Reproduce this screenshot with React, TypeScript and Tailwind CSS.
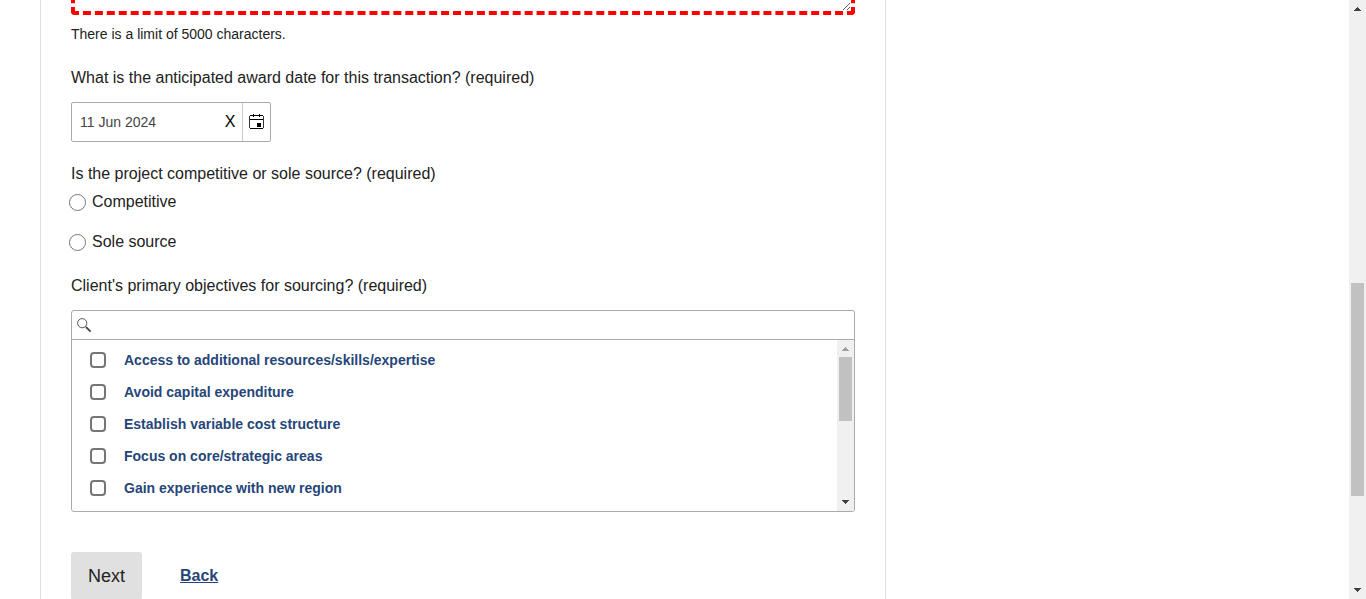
import { useState } from "react";

const objectives = [
  "Access to additional resources/skills/expertise",
  "Avoid capital expenditure",
  "Establish variable cost structure",
  "Focus on core/strategic areas",
  "Gain experience with new region",
];

function Arrow({ down = false, className }: { down?: boolean; className: string }) {
  return (
    <svg viewBox="0 0 7 4" shapeRendering="crispEdges" className={`h-1 w-[7px] shrink-0 ${className}`} aria-hidden="true">
      {down ? (
        <path fill="currentColor" d="M0 0h7v1H0zM1 1h5v1H1zM2 2h3v1H2zM3 3h1v1H3z" />
      ) : (
        <path fill="currentColor" d="M3 0h1v1H3zM2 1h3v1H2zM1 2h5v1H1zM0 3h7v1H0z" />
      )}
    </svg>
  );
}

function CalendarIcon() {
  return (
    <svg viewBox="0 0 15 16" className="h-4 w-[15px]" shapeRendering="crispEdges" aria-hidden="true">
      <path fill="#000" d="M1 1h13v1H1zM1 5h13v1H1zM1 14h13v1H1z" />
      <path fill="#333" d="M0 2h1v12H0zM14 2h1v12h-1z" />
      <path fill="#000" d="M4 0h1v3H4zM10 0h1v3h-1zM3 1h3v1H3zM9 1h3v1H9zM8 9h4v4H8z" />
    </svg>
  );
}

function SearchIcon() {
  return (
    <svg viewBox="0 0 15 15" className="h-[15px] w-[15px] shrink-0" fill="none" aria-hidden="true">
      <circle cx="5.2" cy="5.2" r="4.6" stroke="#444" strokeWidth="0.9" />
      <path d="M8.5 8.5l1.6 1.6" stroke="#444" strokeWidth="1.1" />
      <path d="M9.6 9.6l4 4" stroke="#444" strokeWidth="1.9" />
    </svg>
  );
}

export default function App() {
  const [date, setDate] = useState("11 Jun 2024");
  return (
    <div className="flex h-screen overflow-hidden bg-white font-['Liberation_Sans',Arial,sans-serif] text-base text-[#222]">
      <main className="min-w-0 flex-1 pl-10">
        <form className="flex min-h-full w-full max-w-[846px] flex-col border-x border-[#e0e0e6] px-[30px]" onSubmit={(e) => e.preventDefault()}>
          <div className="flex h-[15px] items-end overflow-hidden">
            <textarea
              aria-label="Project description"
              aria-describedby="limit"
              className="block h-40 w-full shrink-0 resize rounded border-4 border-dashed border-[#ff0000] outline-none"
            />
          </div>
          <p id="limit" className="mt-[9px] text-sm leading-5">There is a limit of 5000 characters.</p>

          <label htmlFor="award" className="mt-[22px] leading-6">
            What is the anticipated award date for this transaction? (required)
          </label>
          <div className="mt-3 flex h-10 w-[200px] rounded-xs border border-[#aaa]">
            <input
              id="award"
              value={date}
              onChange={(e) => setDate(e.target.value)}
              className="min-w-0 flex-1 pl-2 text-sm text-[#444] outline-none"
            />
            <button type="button" aria-label="Clear date" onClick={() => setDate("")} className="w-6 text-base text-black">
              X
            </button>
            <button type="button" aria-label="Open calendar" className="flex w-7 items-center justify-center border-l border-[#ccc]">
              <CalendarIcon />
            </button>
          </div>

          <fieldset className="mt-5">
            <legend className="leading-6">Is the project competitive or sole source? (required)</legend>
            <div className="-ml-0.5 flex flex-col gap-4 pt-1">
              {["Competitive", "Sole source"].map((option) => (
                <label key={option} className="flex items-center gap-1.5 leading-6">
                  <input type="radio" name="source" className="size-[17px] appearance-none rounded-full border border-[#767676] checked:border-4" />
                  {option}
                </label>
              ))}
            </div>
          </fieldset>

          <label htmlFor="search" className="mt-5 leading-6">
            Client's primary objectives for sourcing? (required)
          </label>
          <div className="mt-3 overflow-hidden rounded-[3px] border border-[#aaa]">
            <div className="flex h-[29px] items-center border-b border-[#aaa] px-[5px]">
              <SearchIcon />
              <input id="search" className="min-w-0 flex-1 px-2 text-sm outline-none" />
            </div>
            <div className="flex h-[171px]">
              <ul className="flex-1 pt-1">
                {objectives.map((item) => (
                  <li key={item}>
                    <label className="flex h-8 items-center gap-[18px] pl-[18px] text-sm font-bold text-[#26467a]">
                      <input type="checkbox" className="size-4 appearance-none rounded-[4px] border-2 border-[#767676] checked:bg-[#26467a]" />
                      {item}
                    </label>
                  </li>
                ))}
              </ul>
              <div className="flex w-[17px] flex-col items-center justify-between bg-[#f0f0f0] py-[7px]">
                <Arrow className="text-[#a0a0a0]" />
                <div className="mt-1.5 mb-auto h-16 w-[13px] bg-[#c1c1c1]" />
                <Arrow down className="text-[#404040]" />
              </div>
            </div>
          </div>

          <div className="mt-10 flex items-center gap-[38px]">
            <button type="submit" className="h-12 min-w-[71px] rounded-[3px] bg-[#e0e0e0] px-4 text-lg">Next</button>
            <a href="#back" className="font-bold text-[#26467a] underline">Back</a>
          </div>
        </form>
      </main>
      <div className="flex w-[17px] shrink-0 flex-col items-center bg-[#f0f0f0] py-[7px]">
        <Arrow className="text-[#404040]" />
        <div className="flex w-full flex-1 flex-col items-center">
          <div className="flex-[272]" />
          <div className="w-[13px] flex-[213] bg-[#c1c1c1]" />
          <div className="flex-[92]" />
        </div>
        <Arrow down className="text-[#404040]" />
      </div>
    </div>
  );
}
